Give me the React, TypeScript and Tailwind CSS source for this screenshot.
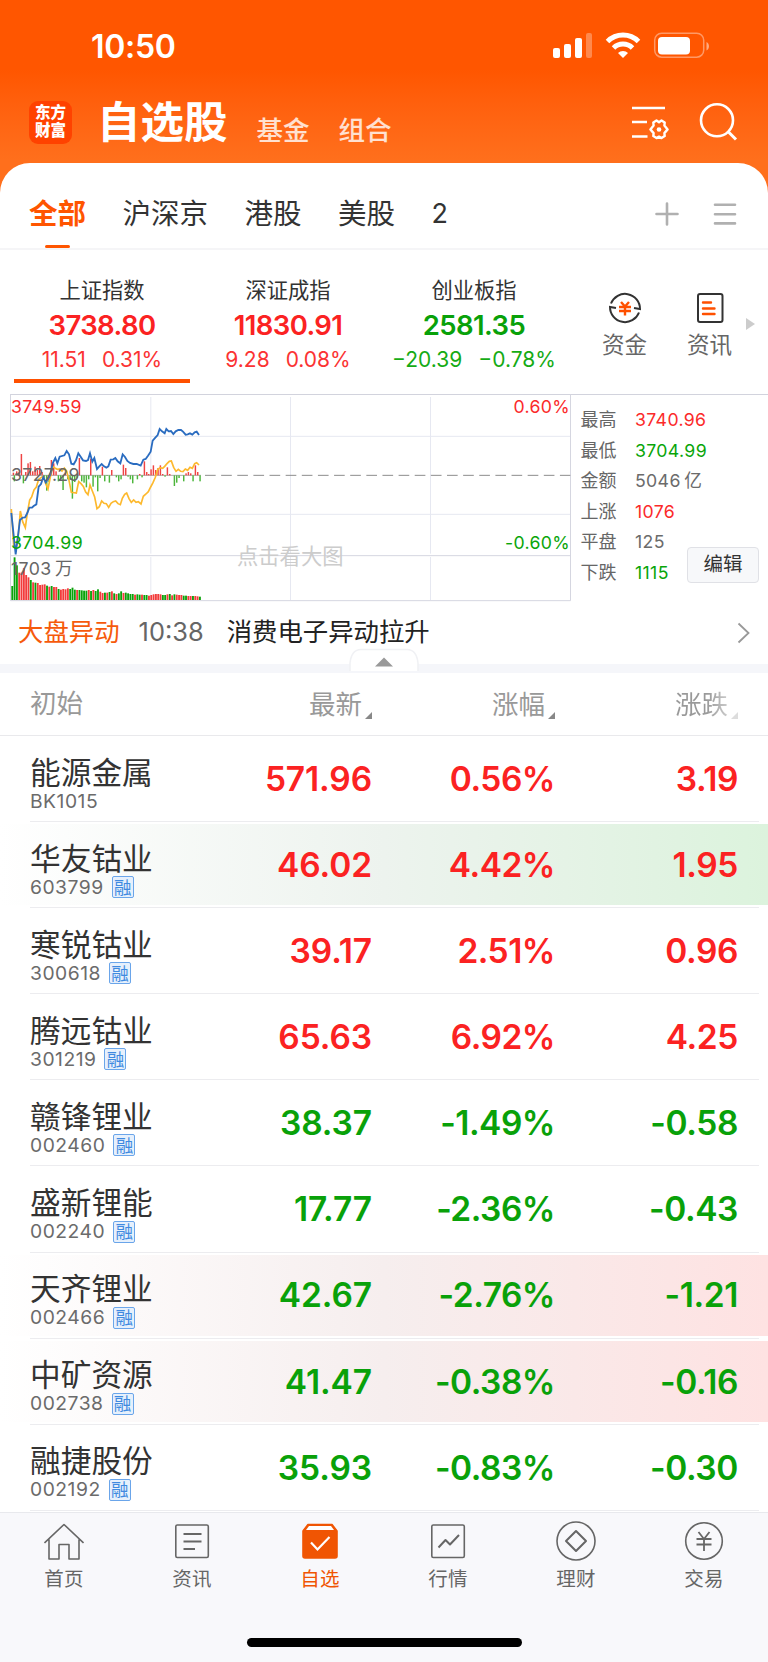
import { clsx } from 'clsx';
import type { ReactNode } from 'react';

interface IndexData {
  name: string;
  value: string;
  change: string;
  percent: string;
  up: boolean;
}

interface StockData {
  name: string;
  code: string;
  price: string;
  percent: string;
  change: string;
  up: boolean;
  margin?: boolean;
  flash?: 'green' | 'red';
}

const indices: IndexData[] = [
  { name: '上证指数', value: '3738.80', change: '11.51', percent: '0.31%', up: true },
  { name: '深证成指', value: '11830.91', change: '9.28', percent: '0.08%', up: true },
  { name: '创业板指', value: '2581.35', change: '−20.39', percent: '−0.78%', up: false },
];

const stats = [
  { label: '最高', value: '3740.96', color: 'text-[#fb2a2a]' },
  { label: '最低', value: '3704.99', color: 'text-[#09a509]' },
  { label: '金额', value: '5046\u2009亿', color: 'text-[#6b6b6b]' },
  { label: '上涨', value: '1076', color: 'text-[#fb2a2a]' },
  { label: '平盘', value: '125', color: 'text-[#6b6b6b]' },
  { label: '下跌', value: '1115', color: 'text-[#09a509]' },
];

const stocks: StockData[] = [
  { name: '能源金属', code: 'BK1015', price: '571.96', percent: '0.56%', change: '3.19', up: true },
  { name: '华友钴业', code: '603799', price: '46.02', percent: '4.42%', change: '1.95', up: true, margin: true, flash: 'green' },
  { name: '寒锐钴业', code: '300618', price: '39.17', percent: '2.51%', change: '0.96', up: true, margin: true },
  { name: '腾远钴业', code: '301219', price: '65.63', percent: '6.92%', change: '4.25', up: true, margin: true },
  { name: '赣锋锂业', code: '002460', price: '38.37', percent: '-1.49%', change: '-0.58', up: false, margin: true },
  { name: '盛新锂能', code: '002240', price: '17.77', percent: '-2.36%', change: '-0.43', up: false, margin: true },
  { name: '天齐锂业', code: '002466', price: '42.67', percent: '-2.76%', change: '-1.21', up: false, margin: true, flash: 'red' },
  { name: '中矿资源', code: '002738', price: '41.47', percent: '-0.38%', change: '-0.16', up: false, margin: true, flash: 'red' },
  { name: '融捷股份', code: '002192', price: '35.93', percent: '-0.83%', change: '-0.30', up: false, margin: true },
];

// 成交量柱：高度 + 颜色 (r / g)
const volumes: [number, string][] = [
  [42, 'g'], [128, 'g'], [104, 'g'], [82, 'r'], [82, 'r'], [96, 'r'], [75, 'r'], [68, 'r'],
  [60, 'g'], [53, 'r'], [52, 'g'], [51, 'r'], [45, 'r'], [46, 'r'], [47, 'r'], [43, 'g'],
  [40, 'r'], [42, 'g'], [39, 'r'], [39, 'r'], [33, 'g'], [31, 'r'], [33, 'r'], [32, 'r'],
  [35, 'r'], [33, 'g'], [37, 'g'], [31, 'g'], [30, 'r'], [30, 'g'], [29, 'g'], [28, 'g'],
  [28, 'g'], [30, 'r'], [27, 'g'], [30, 'r'], [27, 'g'], [32, 'g'], [25, 'r'], [21, 'r'],
  [22, 'g'], [22, 'r'], [24, 'g'], [26, 'r'], [20, 'g'], [18, 'r'], [20, 'g'], [26, 'g'],
  [21, 'r'], [22, 'g'], [20, 'g'], [18, 'g'], [18, 'g'], [16, 'r'], [17, 'g'], [16, 'g'],
  [16, 'r'], [15, 'g'], [15, 'g'], [13, 'r'], [15, 'r'], [17, 'r'], [18, 'r'], [18, 'r'],
  [17, 'r'], [15, 'g'], [15, 'g'], [17, 'r'], [18, 'g'], [14, 'r'], [17, 'g'], [16, 'r'],
  [15, 'r'], [15, 'r'], [13, 'g'], [13, 'g'], [12, 'r'], [12, 'r'], [12, 'g'], [12, 'r'],
  [11, 'r'], [10, 'g'],
];

// 零轴柱：正值向上为红，负值向下为绿
const momentum: [number, number][] = [
  [40, 8], [43, -18], [50, 12], [57, 10], [64, 64], [70, -24], [77, 10], [84, 36], [91, 40],
  [98, 12], [105, 26], [112, 16], [119, 28], [126, 10], [133, -10], [140, -46], [147, -20],
  [154, 46], [161, 36], [168, 12], [175, -18], [182, -12], [189, -44], [196, 8], [203, -12],
  [210, -14], [217, -70], [224, -20], [231, -8], [238, 52], [245, -18], [252, -22], [259, -36],
  [266, -12], [272, 50], [279, -34], [286, -6], [293, -48], [300, -8], [307, 26], [314, -18],
  [321, -2], [328, -22], [335, 16], [349, -6], [356, -18], [363, -12], [370, 32], [377, 22],
  [384, -4], [391, -12], [398, -24], [412, -12], [419, 4], [426, -6], [433, 42], [440, 10],
  [446, 4], [453, 18], [460, 30], [467, 16], [474, 22], [481, 30], [488, 4], [495, -4],
  [502, 24], [509, 4], [523, -32], [530, -22], [537, -8], [551, -18], [558, 6], [565, 10],
  [572, 6], [579, -18], [586, 30], [593, 10], [600, -18],
];

const bluePoints =
  '34,384 47,508 60,405 68,398 75,397 82,384 88,368 96,368 101,363 109,358 116,305 123,297 130,276 137,292 144,282 151,268 158,235 166,219 172,235 179,215 193,211 200,198 207,208 214,236 221,238 228,226 235,205 242,215 249,226 258,228 264,225 270,205 277,230 283,219 291,252 298,244 305,237 312,244 319,248 325,244 332,224 340,223 346,219 353,229 361,235 368,208 375,216 382,228 390,234 400,237 410,237 422,242 430,224 437,222 444,212 452,200 458,167 466,158 473,150 479,132 486,139 494,145 499,132 506,139 513,138 520,147 527,139 535,135 543,135 549,140 557,149 563,148 570,145 577,149 584,142 590,140 597,150';

const yellowPoints =
  '34,372 41,480 48,488 55,450 61,378 68,410 76,428 82,384 89,345 95,336 102,315 109,306 116,283 123,278 130,273 137,296 144,312 151,276 158,244 166,250 172,253 179,252 186,258 193,249 200,258 207,286 214,322 229,324 236,290 243,296 250,304 257,321 264,329 270,300 277,318 284,336 291,371 298,365 305,348 312,355 319,356 326,367 333,355 340,350 347,348 354,356 361,359 367,340 374,328 380,324 387,341 394,352 401,345 408,352 415,350 423,357 430,334 438,327 445,320 452,306 459,293 466,277 473,254 480,248 488,250 494,244 501,236 508,229 514,228 521,247 528,259 535,253 542,259 549,260 556,252 563,256 570,247 577,250 584,236 590,233 597,240';

function StatusIcons() {
  return (
    <svg className="h-[30px] w-[160px]" viewBox="0 0 160 30" fill="#fff">
      <rect x="0" y="17" width="7" height="10" rx="2" />
      <rect x="11" y="13" width="7" height="14" rx="2" />
      <rect x="22" y="7" width="7" height="20" rx="2" />
      <rect x="33" y="2" width="6" height="25" rx="2" opacity="0.3" />
      <g fill="none" stroke="#fff" strokeWidth="5">
        <path d="M54.5 10.5a22 22 0 0 1 31 0" />
        <path d="M60.5 17a13.5 13.5 0 0 1 19 0" />
      </g>
      <path d="M70 27l-5-5a7 7 0 0 1 10 0z" />
      <rect x="101.7" y="2.2" width="49" height="24" rx="7" fill="none" stroke="#fff" strokeOpacity="0.4" strokeWidth="1.5" />
      <rect x="105" y="6" width="32" height="17.5" rx="4" />
      <path d="M153.500 11v8.500c3.300-1.300 3.300-7.200 0-8.500z" opacity="0.5" />
    </svg>
  );
}

function TrendChart() {
  return (
    <svg className="block h-[209px] w-[561px]" viewBox="30 24 1683 627" fill="none">
      <g stroke="#e6e8f1" strokeWidth="3">
        <path d="M33 154H1710M33 388H1710" />
        <path d="M452.500 36V506M452.500 516V645M871.500 36V506M871.500 516V645M1291.500 36V506M1291.500 516V645" />
      </g>
      <path d="M31.500 28V647H1711.500V28M31.500 512H1711.500" stroke="#d5d6e0" strokeWidth="3" />
      <path d="M33 271H603" stroke="#9b9b9b" strokeWidth="2.500" />
      <path d="M615 271H1711" stroke="#8c8c8c" strokeWidth="3" strokeDasharray="32 16.400" />
      {momentum.map(([x, v]) => (
        <rect
          key={x}
          x={x - 2}
          y={v > 0 ? 271 - v : 271}
          width="4.400"
          height={Math.abs(v)}
          fill={v > 0 ? '#ef4444' : '#4db63c'}
        />
      ))}
      <polyline points={yellowPoints} stroke="#fdb92e" strokeWidth="5" />
      <polyline points={bluePoints} stroke="#2a6cc0" strokeWidth="5.500" />
      {volumes.map(([h, c], i) => (
        <rect
          key={i}
          x={34 + i * 6.95}
          y={645 - h}
          width="5.600"
          height={h}
          fill={c === 'r' ? '#f23b3b' : '#0aa20a'}
        />
      ))}
    </svg>
  );
}

function NavItem({ label, active, children }: { label: string; active?: boolean; children: ReactNode }) {
  return (
    <div
      className={clsx(
        'flex flex-1 flex-col items-center pt-2',
        active ? 'text-[#f05503]' : 'text-[#666]'
      )}
    >
      <svg
        className="size-10"
        viewBox="0 0 40 40"
        fill="none"
        stroke="currentColor"
        strokeWidth="1.6"
        strokeLinejoin="round"
      >
        {children}
      </svg>
      <span className="mt-1.5 text-[19.500px] leading-6 tracking-[0.3px]">{label}</span>
    </div>
  );
}

function SortMark({ faded }: { faded?: boolean }) {
  return (
    <svg className="mt-[20px] ml-[3px] size-[7px]" viewBox="0 0 7 7">
      <path d="M7 0v7H0z" fill={faded ? '#ddd' : '#888'} />
    </svg>
  );
}

export default function App() {
  return (
    <div className="h-[1662px] w-[768px] overflow-hidden bg-white font-[Inter,'Noto_Sans_CJK_SC',sans-serif] whitespace-nowrap text-[#333]">
      {/* 顶部橙色区域 */}
      <header className="h-[200px] bg-linear-to-b from-[#ff5600] from-35% to-[#ff6f1c] to-80% text-white">
        <div className="flex h-[92px] items-center justify-between pr-[55px] pl-[91px]">
          <span className="pt-[2px] text-[32px] font-semibold tracking-[-0.3px]">10:50</span>
          <StatusIcons />
        </div>
        <div className="flex h-[60px] items-center pl-[29px]">
          <div className="flex size-[43px] flex-col items-center justify-center rounded-[9px] bg-[#ff4200] text-[15.500px] leading-[18px] font-black">
            <span>东方</span>
            <span>财富</span>
          </div>
          <h1 className="ml-[25px] text-[43.500px] leading-[60px] font-bold">自选股</h1>
          <span className="ml-[29px] pt-[17px] text-[26.500px] font-medium text-white/80">基金</span>
          <span className="ml-[29px] pt-[17px] text-[26.500px] font-medium text-white/80">组合</span>
          <svg className="ml-auto h-[40px] w-[42px]" viewBox="0 0 42 40" fill="none" stroke="#fff" strokeWidth="2.600">
            <path d="M2 6H35M2 20H17M2 34.500H17.500" />
            <path
              d="M29 20.200l-2.500-1.700-3.200 2 .3 3-3.200 3.900 3.200 3.700-.3 3 3.200 2 2.500-1.500 2.500 1.500 3.200-2-.3-3 3.200-3.700-3.200-3.900.3-3-3.200-2z"
              strokeWidth="2.400"
              strokeLinejoin="round"
            />
            <circle cx="29" cy="27.500" r="2.300" fill="#fff" stroke="none" />
          </svg>
          <svg className="mr-[29px] ml-[25px] h-[40px] w-[42px]" viewBox="0 0 42 40" fill="none" stroke="#fff" strokeWidth="2.600">
            <circle cx="20" cy="18.300" r="16" />
            <path d="M31 29.500l8 8" strokeWidth="3" />
          </svg>
        </div>
      </header>

      <main className="relative -mt-[37px] rounded-t-[30px] bg-white">
        {/* 分组标签 */}
        <nav className="flex h-[87px] items-center border-b-2 border-[#f5f5f7] pt-[17px] pl-[29px] text-[28.500px] leading-[68px]">
          <div className="relative font-bold text-[#ff5500]">
            全部
            <span className="absolute bottom-0 left-4 h-[3px] w-[25px] rounded-full bg-[#ff5500]" />
          </div>
          <span className="ml-[36.500px]">沪深京</span>
          <span className="ml-[36.500px]">港股</span>
          <span className="ml-[36.500px]">美股</span>
          <span className="ml-[36.500px] text-[27px]">2</span>
          <svg className="ml-auto size-6" viewBox="0 0 24 24" stroke="#b0b0b0" strokeWidth="2.600" strokeLinecap="round">
            <path d="M1.500 12h21M12 1.500v21" />
          </svg>
          <svg className="mr-[31px] ml-[34px] size-6" viewBox="0 0 24 24" stroke="#b0b0b0" strokeWidth="2.600" strokeLinecap="round">
            <path d="M2 2.800h20M2 12.200h20M2 21.400h20" />
          </svg>
        </nav>

        {/* 指数 */}
        <section className="flex h-[143px] pl-[9px]">
          {indices.map((item, i) => (
            <div key={item.name} className="flex w-[186px] flex-col items-center pt-[27px]">
              <span className="text-[21.300px] leading-[26px]">{item.name}</span>
              <span
                className={clsx(
                  'mt-[5px] text-[27.500px] leading-[34px] font-semibold tracking-[-0.6px]',
                  item.up ? 'text-[#fb2222]' : 'text-[#09a109]'
                )}
              >
                {item.value}
              </span>
              <span
                className={clsx(
                  'mt-[5px] flex gap-4 text-[21px] leading-[26px]',
                  item.up ? 'text-[#fb3333]' : 'text-[#15ab15]'
                )}
              >
                <span>{item.change}</span>
                <span>{item.percent}</span>
              </span>
              {i === 0 && <span className="mt-1.5 h-1 w-[176px] bg-[#ff5000]" />}
            </div>
          ))}
          <div className="ml-[15px] flex w-[85px] flex-col items-center pt-[40px]">
            <svg className="size-9" viewBox="0 0 36 36" fill="none" stroke="#333" strokeWidth="2">
              <path d="M4 13.500A15 15 0 0 1 33 19l-6-1M32 22.500A15 15 0 0 1 3 17l6 1" />
              <path d="M14 12l4 4.500 4-4.500M12 17h12M12 21h12M18 16v9.500" stroke="#ff5000" strokeWidth="2.400" />
            </svg>
            <span className="mt-[6px] text-[22.500px] leading-[26px] text-[#666]">资金</span>
          </div>
          <div className="flex w-[85px] flex-col items-center pt-[40px]">
            <svg className="size-9" viewBox="0 0 36 36" fill="none" stroke="#333" strokeWidth="2">
              <rect x="6" y="4" width="24.500" height="28" rx="2" />
              <path d="M11 12.500h8M11 18.500h11.500M11 24h11.500" stroke="#ff5000" strokeWidth="2.400" strokeLinecap="round" />
            </svg>
            <span className="mt-[6px] text-[22.500px] leading-[26px] text-[#666]">资讯</span>
          </div>
          <svg className="mt-[68px] -ml-[6px] h-3 w-[9px]" viewBox="0 0 9 12">
            <path d="M0 0l9 6-9 6z" fill="#ccc" />
          </svg>
        </section>

        {/* 分时图 */}
        <section className="relative flex h-[209px] pl-[10px]">
          <span className="absolute top-[1px] right-0 left-[10px] h-px bg-[#d2d3dd]" />
          <div className="relative text-[17.700px] leading-5 tracking-[0.35px]">
            <TrendChart />
            <span className="absolute top-[4px] left-[1px] text-[#fb2a2a]">3749.59</span>
            <span className="absolute top-[72px] left-[1px] text-[#666]">3727.29</span>
            <span className="absolute top-[140px] left-[1px] text-[#09a509]">3704.99</span>
            <span className="absolute top-[166px] left-[1px] text-[#666]">{'1703\u2009万'}</span>
            <span className="absolute top-[4px] right-[1px] text-[#fb2a2a]">0.60%</span>
            <span className="absolute top-[140px] right-[1px] text-[#09a509]">-0.60%</span>
            <span className="absolute top-[151px] left-[227px] text-[21.300px] leading-6 tracking-normal text-[#ccc]">点击看大图</span>
          </div>
          <dl className="mt-3 ml-[9.500px] text-[18px] leading-[30.500px]">
            {stats.map(({ label, value, color }) => (
              <div key={label} className="flex">
                <dt className="w-[54.500px] text-[#666]">{label}</dt>
                <dd className={clsx('text-[17.700px] tracking-[0.35px]', color)}>{value}</dd>
              </div>
            ))}
          </dl>
          <button className="absolute top-[154px] right-[9px] h-[36px] w-[72px] rounded-[4px] border border-[#e0e1e6] bg-[#f7f8fa] text-[19.500px]">
            编辑
          </button>
        </section>

        {/* 大盘异动 */}
        <section className="relative flex h-[62px] items-center pb-px pl-[18px] text-[25.400px]">
          <span className="text-[#f65a0b]">大盘异动</span>
          <span className="ml-[19px] text-[#666]">10:38</span>
          <span className="ml-[23px] text-[#222]">消费电子异动拉升</span>
          <svg className="mr-[18px] ml-auto h-[22px] w-[13px]" viewBox="0 0 13 22" fill="none" stroke="#999" strokeWidth="1.800">
            <path d="M1.500 1.500l10 9.500-10 9.500" />
          </svg>
          <svg className="absolute top-[46px] left-[349px] z-10 h-[24px] w-[70px]" viewBox="0 0 70 24">
            <path d="M1 23V15C2 6 5 1.500 12 1.500h46c7 0 10 4.500 11 13.500v8" fill="#fff" stroke="#f0f1f4" strokeWidth="1.500" />
            <path d="M26 18.500l9-9 9 9z" fill="#999" />
          </svg>
        </section>
        <div className="h-[9px] bg-[#f5f6fa]" />

        {/* 自选列表 */}
        <div className="flex h-[63px] items-center border-b border-[#e9e9ec] pt-[2px] pl-[30px] text-[26.500px] text-[#999]">
          <span className="w-[154px] pb-[2px]">初始</span>
          <span className="flex w-[188px] items-center justify-end">
            最新
            <SortMark />
          </span>
          <span className="flex w-[183px] items-center justify-end">
            涨幅
            <SortMark />
          </span>
          <span className="flex w-[183px] items-center justify-end">
            <span className="bg-linear-to-r from-[#999] from-60% to-[#ccc] bg-clip-text text-transparent">涨跌</span>
            <SortMark faded />
          </span>
        </div>
        <div className="h-[776px]">
          {stocks.map((stock) => (
            <div key={stock.code} className="relative h-[86.100px]">
              <div
                className={clsx(
                  'absolute inset-x-0 top-[2px] bottom-[3px]',
                  stock.flash === 'green' && 'bg-linear-to-r from-white via-[#edf3ee] to-[#dcf3dd]',
                  stock.flash === 'red' && 'bg-linear-to-r from-white via-[#f6eeee] to-[#fee2e2]'
                )}
              />
              <div
                className={clsx(
                  'relative mr-[9px] ml-[30px] flex h-full items-center border-b border-[#ececef] text-[33.500px] font-semibold',
                  stock.up ? 'text-[#fb2222]' : 'text-[#09a109]'
                )}
              >
                <div className="w-[154px] font-normal">
                  <div className="pt-[13px] text-[30.700px] leading-[32px] text-[#333]">{stock.name}</div>
                  <div className="flex items-center text-[19.300px] leading-[25px] tracking-[0.5px] text-[#6b6b6b]">
                    {stock.code}
                    {stock.margin && (
                      <span className="ml-[8px] flex size-[22px] items-center justify-center rounded-[2px] border border-[#6aa5ea] bg-[#e6f0fc] text-[17.500px] tracking-normal text-[#3f8ae0]">
                        融
                      </span>
                    )}
                  </div>
                </div>
                <span className="w-[188px] pt-px text-right tracking-[-0.1px]">{stock.price}</span>
                <span className="w-[183px] pt-px text-right tracking-[-0.5px]">{stock.percent}</span>
                <span className="w-[183px] pt-px text-right tracking-[-0.4px]">{stock.change}</span>
              </div>
            </div>
          ))}
        </div>
      </main>

      {/* 底部导航 */}
      <footer className="relative flex h-[150px] border-t border-[#e8e9ed] bg-[#f8f8fb]">
        <NavItem label="首页">
          <path d="M.5 22L20 3.500 39.500 22M5 18.500V38H15V23.500H25V38H35V18.500" />
        </NavItem>
        <NavItem label="资讯">
          <rect x="3.800" y="4" width="32.500" height="32.500" rx="1.500" />
          <path d="M11.500 13h18M11.500 20.500h18M11.500 28h11.500" strokeWidth="2" />
        </NavItem>
        <NavItem label="自选" active>
          <path d="M3 10l5-6.500h24l5 6.500v25q0 2-2 2H5q-2 0-2-2z" fill="#f05503" />
          <path d="M6 9l3-4h22l3 4z" fill="#fff" stroke="none" />
          <path d="M11 21.500l6.500 7L29.500 16" stroke="#fff" strokeWidth="2.200" strokeLinejoin="miter" />
        </NavItem>
        <NavItem label="行情">
          <rect x="3.800" y="4" width="32.500" height="32.500" rx="1.500" />
          <path d="M10.500 26.500l7-7.500 4.500 4.500 9-9.500" strokeWidth="2" />
        </NavItem>
        <NavItem label="理财">
          <circle cx="20" cy="20" r="19" />
          <path d="M20 10l10 10-10 10-10-10z" strokeWidth="2" />
        </NavItem>
        <NavItem label="交易">
          <circle cx="20" cy="20" r="18.300" />
          <path d="M14.500 11l5.500 7 5.500-7M12.500 18h15M12.500 23.500h15M20 18v12" strokeWidth="1.800" />
        </NavItem>
        <span className="absolute bottom-[15px] left-[247px] h-[9px] w-[275px] rounded-full bg-black" />
      </footer>
    </div>
  );
}
